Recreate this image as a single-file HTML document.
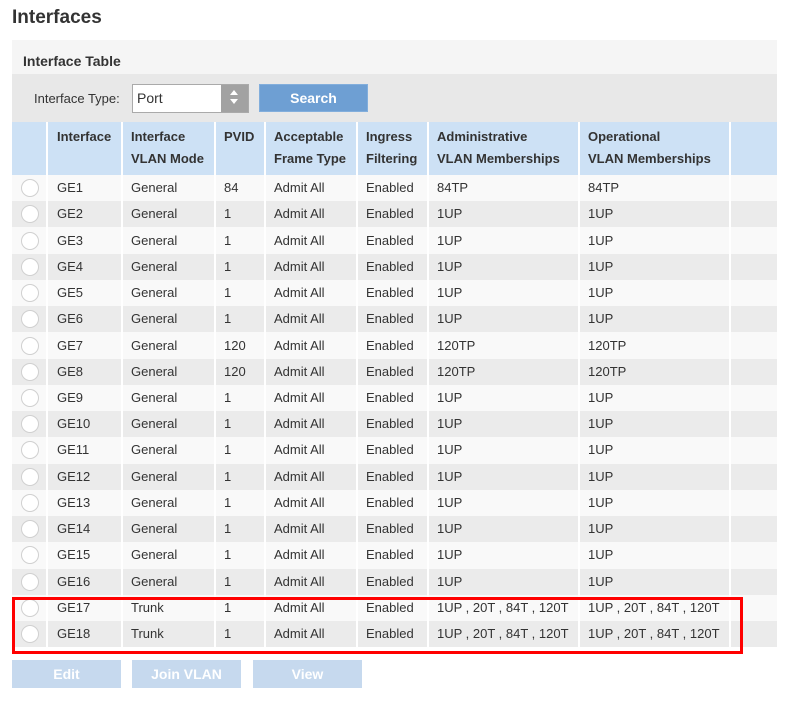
<!DOCTYPE html>
<html><head><style>
body{margin:0;background:#fff;font-family:"Liberation Sans",Arial,sans-serif;color:#333;font-size:13px;width:795px;height:727px;overflow:hidden;position:relative}
.a{position:absolute}
h1{position:absolute;left:12px;top:7px;margin:0;font-size:19px;font-weight:bold;color:#333}
table{position:absolute;left:12px;top:122px;border-collapse:collapse;width:765px;table-layout:fixed}
th,td{border-left:2px solid #fff;padding:0 0 0 8px;text-align:left;white-space:nowrap}
th{background:#cde1f5;height:49px;padding-top:4px;font-weight:bold;line-height:22px;vertical-align:top;font-size:13px}
td{height:26.24px;line-height:26px;padding-top:0}
tr:nth-child(even) td{background:#f9f9f9}
tr:nth-child(odd) td{background:#ebebeb}
th:first-child,td:first-child{border-left:none;padding:0}
td:nth-child(2),th:nth-child(2){padding-left:9px}
.r{display:block;width:16px;height:16px;border:1px solid #d0d0d0;border-radius:50%;background:#fff;margin-left:9px}
.btn{position:absolute;top:660px;height:28px;line-height:28px;background:#c6d9ee;color:#fff;font-weight:bold;text-align:center;font-size:14px}
</style></head><body>
<h1>Interfaces</h1>
<div class="a" style="left:12px;top:40px;width:765px;height:34px;background:#f5f5f5"></div>
<div class="a" style="left:23px;top:53px;font-weight:bold;font-size:14px">Interface Table</div>
<div class="a" style="left:12px;top:74px;width:765px;height:48px;background:#e8e8e8"></div>
<div class="a" style="left:34px;top:91px;">Interface Type:</div>
<div class="a" style="left:132px;top:84px;width:115px;height:27px;border:1px solid #aaa;background:#fff"></div>
<div class="a" style="left:137px;top:90px;font-size:14px">Port</div>
<div class="a" style="left:221px;top:85px;width:27px;height:27px;background:#a2a2a2"></div>
<div class="a" style="left:230px;top:90px;width:0;height:0;border-left:4px solid transparent;border-right:4px solid transparent;border-bottom:5px solid #fff"></div>
<div class="a" style="left:230px;top:99px;width:0;height:0;border-left:4px solid transparent;border-right:4px solid transparent;border-top:5px solid #fff"></div>
<div class="a" style="left:259px;top:84px;width:109px;height:28px;line-height:26px;background:#6e9fd3;color:#fff;font-weight:bold;text-align:center;font-size:14px;border:1px solid #82aedc;box-sizing:border-box">Search</div>
<table>
<colgroup><col style="width:35px"><col style="width:75px"><col style="width:93px"><col style="width:50px"><col style="width:92px"><col style="width:71px"><col style="width:151px"><col style="width:151px"><col></colgroup>
<tr><th></th><th>Interface</th><th>Interface<br>VLAN Mode</th><th>PVID</th><th>Acceptable<br>Frame Type</th><th>Ingress<br>Filtering</th><th>Administrative<br>VLAN Memberships</th><th>Operational<br>VLAN Memberships</th><th></th></tr>
<tr><td><i class="r"></i></td><td>GE1</td><td>General</td><td>84</td><td>Admit All</td><td>Enabled</td><td>84TP</td><td>84TP</td><td></td></tr>
<tr><td><i class="r"></i></td><td>GE2</td><td>General</td><td>1</td><td>Admit All</td><td>Enabled</td><td>1UP</td><td>1UP</td><td></td></tr>
<tr><td><i class="r"></i></td><td>GE3</td><td>General</td><td>1</td><td>Admit All</td><td>Enabled</td><td>1UP</td><td>1UP</td><td></td></tr>
<tr><td><i class="r"></i></td><td>GE4</td><td>General</td><td>1</td><td>Admit All</td><td>Enabled</td><td>1UP</td><td>1UP</td><td></td></tr>
<tr><td><i class="r"></i></td><td>GE5</td><td>General</td><td>1</td><td>Admit All</td><td>Enabled</td><td>1UP</td><td>1UP</td><td></td></tr>
<tr><td><i class="r"></i></td><td>GE6</td><td>General</td><td>1</td><td>Admit All</td><td>Enabled</td><td>1UP</td><td>1UP</td><td></td></tr>
<tr><td><i class="r"></i></td><td>GE7</td><td>General</td><td>120</td><td>Admit All</td><td>Enabled</td><td>120TP</td><td>120TP</td><td></td></tr>
<tr><td><i class="r"></i></td><td>GE8</td><td>General</td><td>120</td><td>Admit All</td><td>Enabled</td><td>120TP</td><td>120TP</td><td></td></tr>
<tr><td><i class="r"></i></td><td>GE9</td><td>General</td><td>1</td><td>Admit All</td><td>Enabled</td><td>1UP</td><td>1UP</td><td></td></tr>
<tr><td><i class="r"></i></td><td>GE10</td><td>General</td><td>1</td><td>Admit All</td><td>Enabled</td><td>1UP</td><td>1UP</td><td></td></tr>
<tr><td><i class="r"></i></td><td>GE11</td><td>General</td><td>1</td><td>Admit All</td><td>Enabled</td><td>1UP</td><td>1UP</td><td></td></tr>
<tr><td><i class="r"></i></td><td>GE12</td><td>General</td><td>1</td><td>Admit All</td><td>Enabled</td><td>1UP</td><td>1UP</td><td></td></tr>
<tr><td><i class="r"></i></td><td>GE13</td><td>General</td><td>1</td><td>Admit All</td><td>Enabled</td><td>1UP</td><td>1UP</td><td></td></tr>
<tr><td><i class="r"></i></td><td>GE14</td><td>General</td><td>1</td><td>Admit All</td><td>Enabled</td><td>1UP</td><td>1UP</td><td></td></tr>
<tr><td><i class="r"></i></td><td>GE15</td><td>General</td><td>1</td><td>Admit All</td><td>Enabled</td><td>1UP</td><td>1UP</td><td></td></tr>
<tr><td><i class="r"></i></td><td>GE16</td><td>General</td><td>1</td><td>Admit All</td><td>Enabled</td><td>1UP</td><td>1UP</td><td></td></tr>
<tr><td><i class="r"></i></td><td>GE17</td><td>Trunk</td><td>1</td><td>Admit All</td><td>Enabled</td><td>1UP , 20T , 84T , 120T</td><td>1UP , 20T , 84T , 120T</td><td></td></tr>
<tr><td><i class="r"></i></td><td>GE18</td><td>Trunk</td><td>1</td><td>Admit All</td><td>Enabled</td><td>1UP , 20T , 84T , 120T</td><td>1UP , 20T , 84T , 120T</td><td></td></tr>
</table>
<div class="a" style="left:12px;top:597px;width:725px;height:51px;border:3px solid #f00"></div>
<div class="btn" style="left:12px;width:109px">Edit</div>
<div class="btn" style="left:132px;width:109px">Join VLAN</div>
<div class="btn" style="left:253px;width:109px">View</div>
</body></html>
